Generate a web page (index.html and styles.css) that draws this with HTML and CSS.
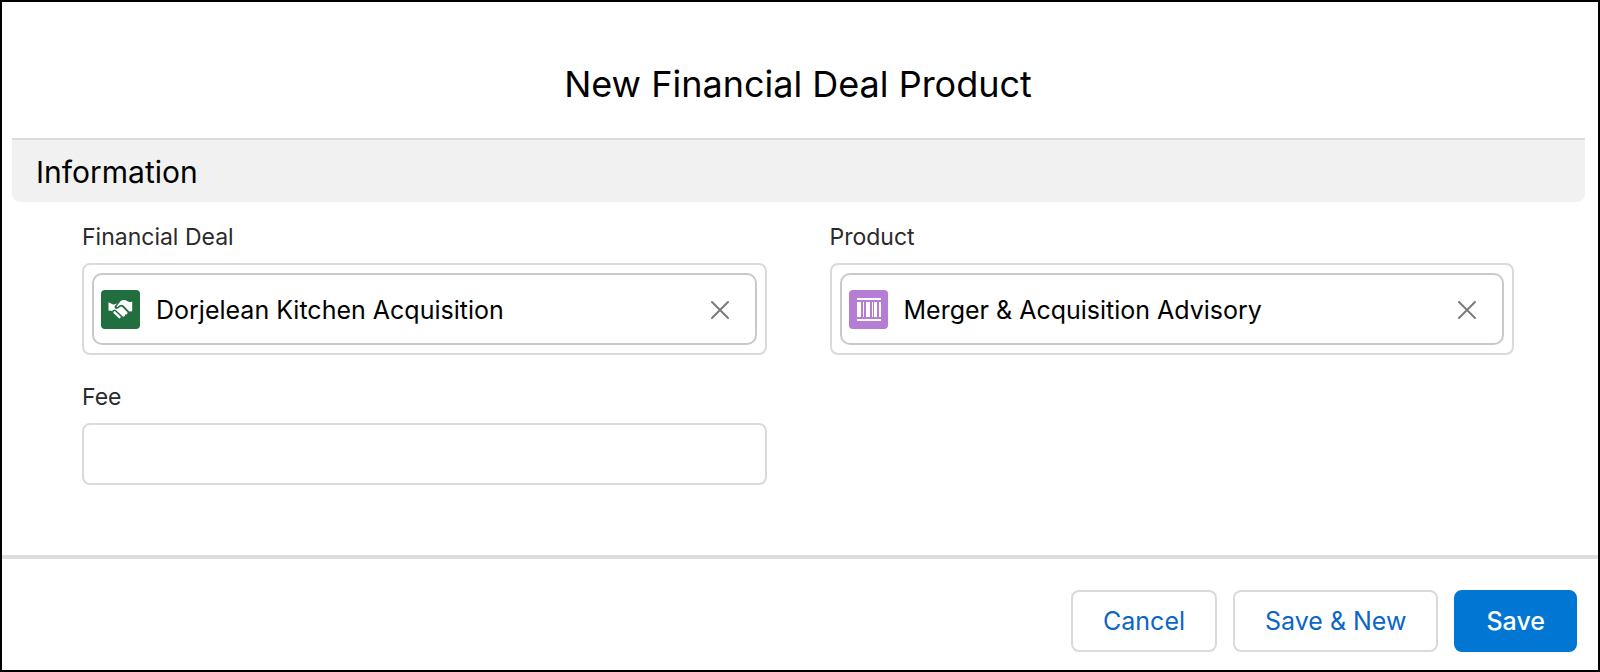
FILE: index.html
```html
<!DOCTYPE html>
<html lang="en">
<head>
    <meta charset="UTF-8">
    <meta name="viewport" content="width=device-width, initial-scale=1.0">
    <title>New Financial Deal Product</title>
    <link rel="stylesheet" href="styles.css">
</head>
<body>
    <form class="modal" id="dealProductForm">
        <header class="modal-header">
            <h1>New Financial Deal Product</h1>
        </header>

        <main class="modal-body">
            <h2 class="section-title">Information</h2>
            <div class="form-grid">
                <div class="form-group">
                    <label for="financialDeal">Financial Deal</label>
                    <div class="lookup">
                        <div class="pill">
                            <svg class="pill-icon deal" viewBox="0 0 39 39" aria-hidden="true">
                                <path fill="#fff" d="M7.500 12.200 L11.500 14.200 Q13 14.700 15 13.900 L16.700 13 L14 15.700 Q12.800 17.300 14.200 18.400 Q15.600 19.400 17.200 18.300 L19.500 16.700 Q20.600 16.300 21.600 17.200 L26.200 22 Q27 23.200 26 24.200 Q25 25 23.900 24.200 Q24.600 25.500 23.500 26.300 Q22.300 27.100 21.200 26 L14.900 19.900 Q13.500 18.900 12.300 20 L11.200 21 L7.500 20.500 Z"/>
                                <path fill="#fff" d="M15.700 16.200 L19.400 11.300 Q20.700 9.900 23 9.900 Q24.800 9.900 26.500 11.200 Q28 12.300 30 11.900 L31.200 11.500 L31.200 21.200 L28.300 21.600 L22.700 15.700 Q20.700 13.900 18.600 15.300 L16.500 16.900 Q15.500 17.300 15.700 16.200 Z"/>
                                <path fill="none" stroke="#fff" stroke-width="2.400" stroke-linecap="round" d="M13.600 22.300 L18.500 27.200"/>
                            </svg>
                            <input type="text" id="financialDeal" value="Dorjelean Kitchen Acquisition" readonly>
                            <button type="button" class="clear-btn" aria-label="Clear Financial Deal">
                                <svg viewBox="0 0 20 20" aria-hidden="true"><path d="M2 2L18 18M18 2L2 18"/></svg>
                            </button>
                        </div>
                    </div>
                </div>

                <div class="form-group">
                    <label for="product">Product</label>
                    <div class="lookup">
                        <div class="pill">
                            <svg class="pill-icon product" viewBox="0 0 39 39" aria-hidden="true">
                                <path fill="#fff" d="M8 8h24v2H8zM8 12h4v15H8zM14 12h1v15h-1zM17 12h4v15h-4zM23 12h1v15h-1zM25 12h3v15h-3zM30 12h2v15h-2zM8 29h24v2H8z"/>
                            </svg>
                            <input type="text" id="product" value="Merger &amp; Acquisition Advisory" readonly>
                            <button type="button" class="clear-btn" aria-label="Clear Product">
                                <svg viewBox="0 0 20 20" aria-hidden="true"><path d="M2 2L18 18M18 2L2 18"/></svg>
                            </button>
                        </div>
                    </div>
                </div>

                <div class="form-group">
                    <label for="fee">Fee</label>
                    <input type="text" id="fee" class="text-input">
                </div>
            </div>
        </main>

        <footer class="modal-footer">
            <button type="button" class="btn">Cancel</button>
            <button type="button" class="btn">Save &amp; New</button>
            <button type="submit" class="btn btn-primary">Save</button>
        </footer>
    </form>
</body>
</html>
```
FILE: styles.css
```css
* {
    box-sizing: border-box;
}

body {
    margin: 0;
    font-family: Inter, "Liberation Sans", sans-serif;
    color: #000;
    background-color: #fff;
}

.modal {
    display: flex;
    flex-direction: column;
    min-height: 100vh;
    border: 2px solid #000;
}

.modal-header {
    padding: 57px 14px 29px 10px;
    text-align: center;
}

h1 {
    margin: 0;
    font-size: 36px;
    font-weight: 400;
    line-height: 50px;
}

.modal-body {
    flex: 1;
    padding-bottom: 70px;
}

.section-title {
    margin: 0 13px 0 10px;
    padding: 12px 24px 10px;
    border-top: 2px solid #dcdcdc;
    border-radius: 0 0 8px 8px;
    background-color: #f1f1f1;
    font-size: 30px;
    font-weight: 400;
    line-height: 40px;
}

.form-grid {
    display: grid;
    grid-template-columns: 1fr 1fr;
    gap: 29px 63px;
    padding: 22px 84px 0 80px;
}

label {
    display: block;
    margin-bottom: 13px;
    color: #2b2b2b;
    font-size: 23px;
    line-height: 26px;
}

.lookup {
    padding: 8px;
    border: 2px solid #dadada;
    border-radius: 8px;
}

.pill {
    display: flex;
    align-items: center;
    height: 72px;
    padding: 1px 13px 0 7px;
    border: 2px solid #c9c9c9;
    border-radius: 10px;
}

.pill-icon {
    flex: none;
    width: 39px;
    height: 39px;
    border-radius: 4px;
}

.pill-icon.deal {
    background-color: #216e3e;
}

.pill-icon.product {
    background-color: #b67dd5;
}

.pill input {
    flex: 1;
    min-width: 0;
    padding: 0 16px;
    border: none;
    outline: none;
    background: none;
    color: #000;
    font-family: inherit;
    font-size: 25px;
    line-height: 32px;
}

.clear-btn {
    display: flex;
    align-items: center;
    justify-content: center;
    width: 44px;
    height: 44px;
    padding: 0;
    border: none;
    background: none;
    cursor: pointer;
}

.clear-btn svg {
    width: 20px;
    height: 20px;
    fill: none;
    stroke: #7b7b7b;
    stroke-width: 2;
    stroke-linecap: round;
}

.text-input {
    display: block;
    width: 100%;
    height: 62px;
    padding: 0 16px;
    border: 2px solid #dadada;
    border-radius: 8px;
    font-family: inherit;
    font-size: 25px;
}

.modal-footer {
    display: flex;
    justify-content: flex-end;
    gap: 16px;
    padding: 31px 21px 18px;
    border-top: 4px solid #dcdddd;
}

.btn {
    height: 62px;
    padding: 0 30px;
    border: 2px solid #dadada;
    border-radius: 8px;
    background-color: #fff;
    color: #0b66c7;
    font-family: inherit;
    font-size: 25px;
    cursor: pointer;
}

.btn-primary {
    border-color: #0176d3;
    background-color: #0176d3;
    color: #fff;
    font-weight: 500;
}
```
